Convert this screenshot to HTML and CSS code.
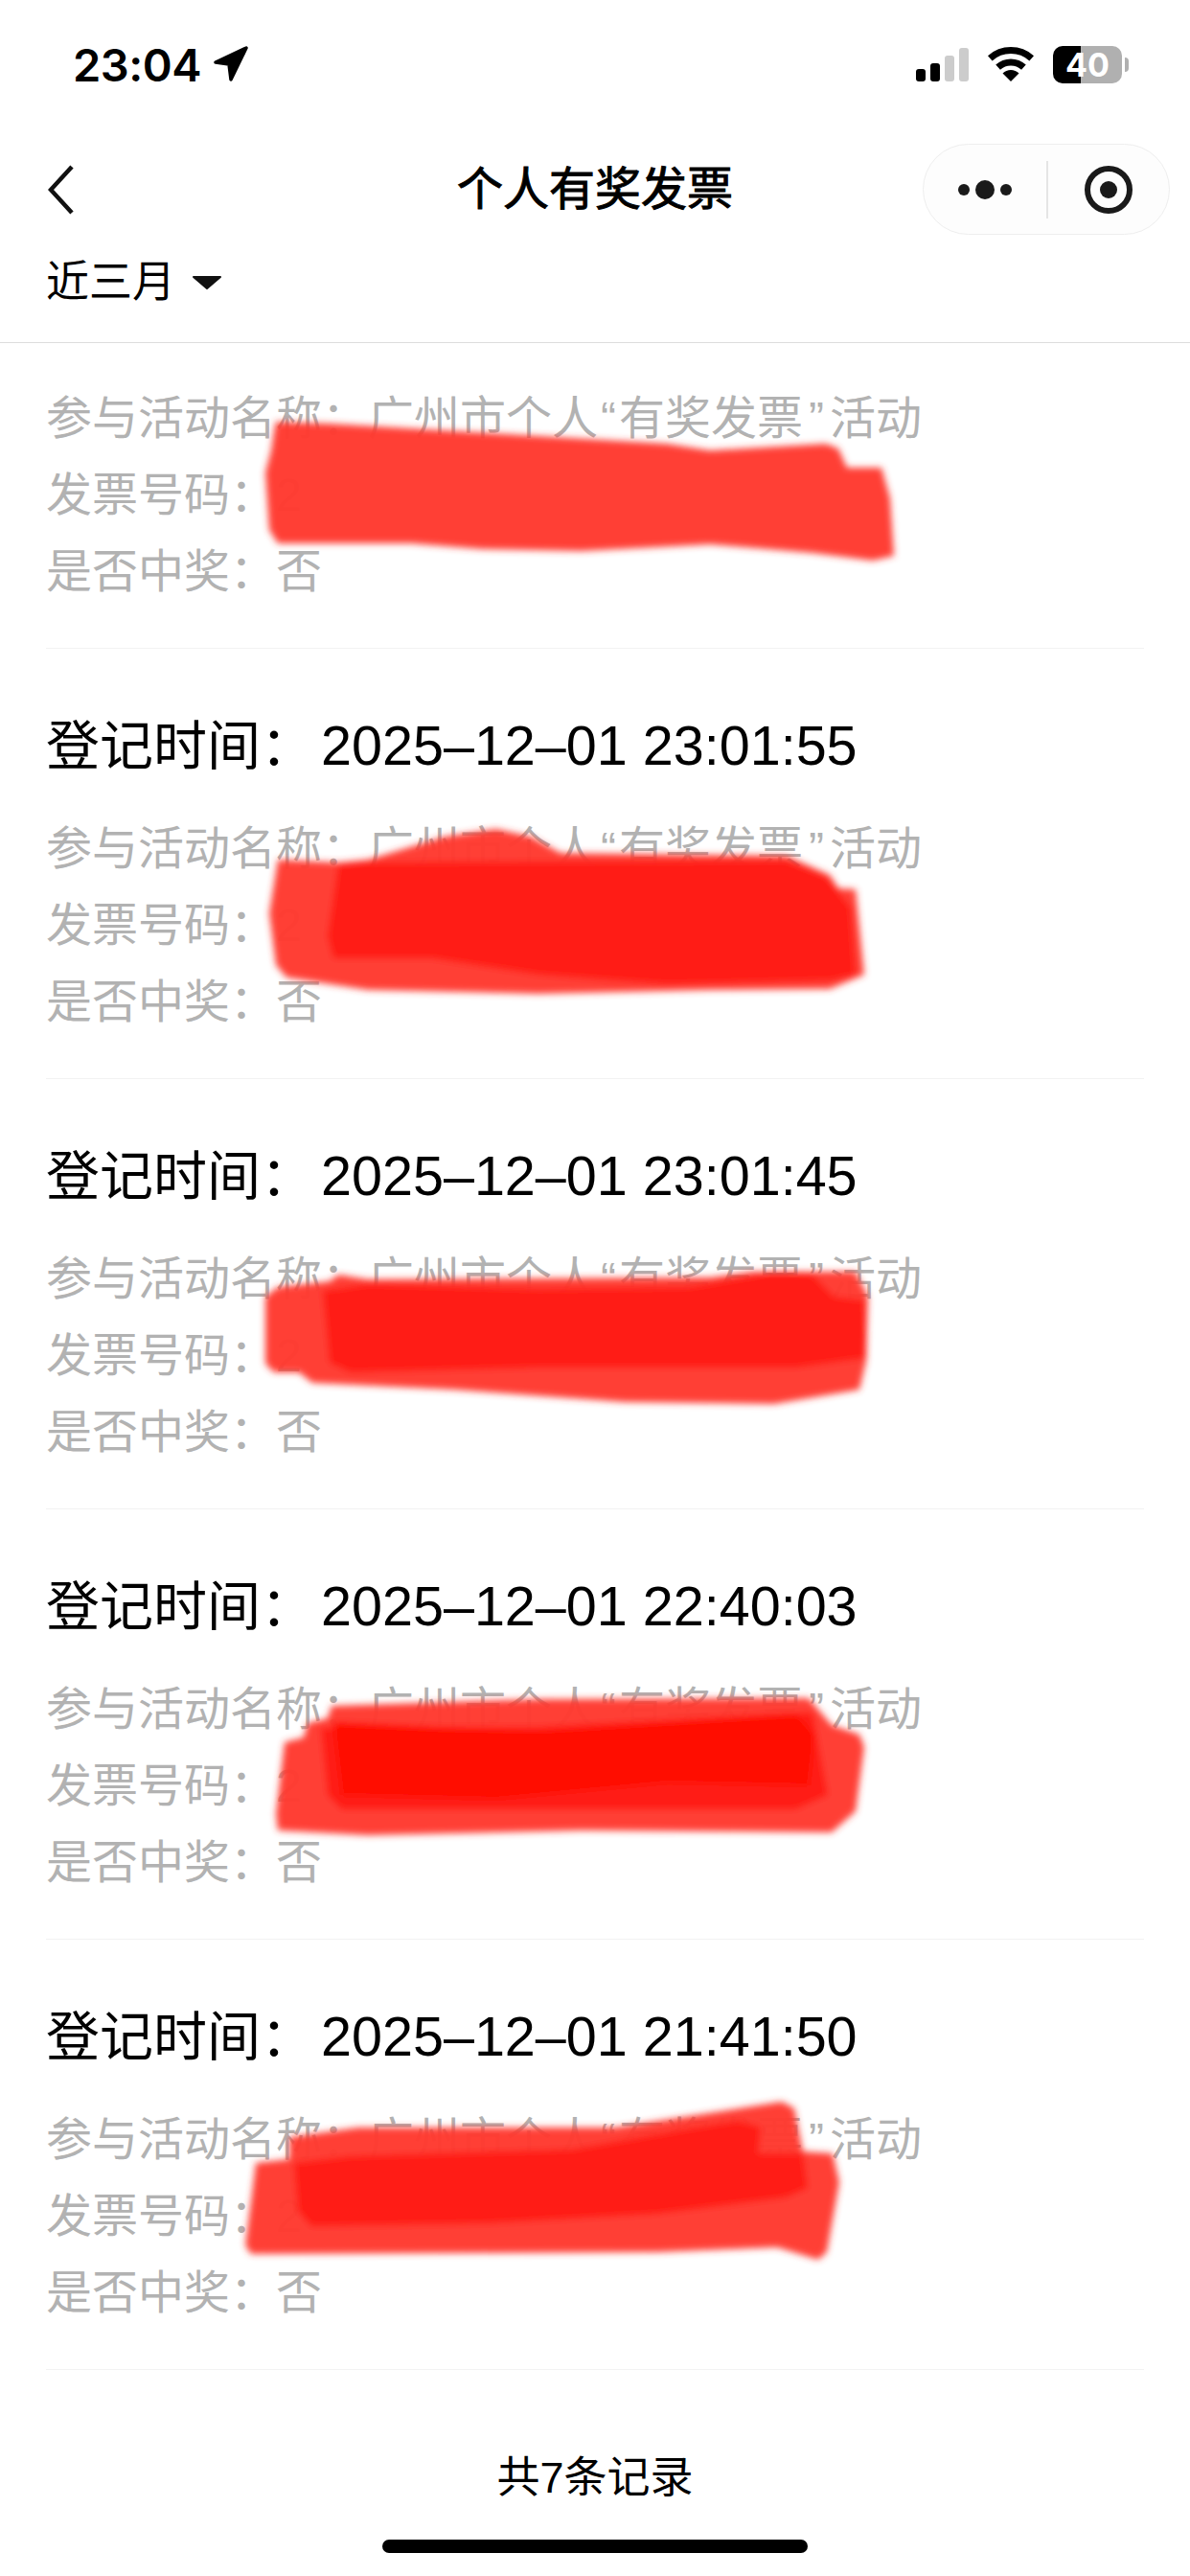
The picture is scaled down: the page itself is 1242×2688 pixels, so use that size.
FILE: index.html
```html
<!DOCTYPE html>
<html lang="zh-CN">
<head>
    <meta charset="UTF-8">
    <meta name="viewport" content="width=device-width, initial-scale=1.0">
    <title>个人有奖发票</title>
    <link rel="stylesheet" href="styles.css">
</head>
<body>
    <main class="page">
        <header class="status-bar">
            <div class="status-time">
                <span>23:04</span>
                <svg class="location-icon" viewBox="0 0 38 38" width="38" height="38">
                    <path d="M3 17 L35 2 L19 35 L17 19 Z" fill="#000" stroke="#000" stroke-width="3.5" stroke-linejoin="round"/>
                </svg>
            </div>
            <div class="status-icons">
                <svg viewBox="0 0 55 35" width="55" height="35">
                    <rect x="0" y="22" width="10" height="13" rx="3" fill="#000"/>
                    <rect x="15" y="16" width="10" height="19" rx="3" fill="#000"/>
                    <rect x="30" y="8" width="10" height="27" rx="3" fill="#ccc"/>
                    <rect x="45" y="0" width="10" height="35" rx="3" fill="#ccc"/>
                </svg>
                <svg viewBox="0 0 48 36" width="48" height="36">
                    <path d="M2.300 11.900 A32.500 32.500 0 0 1 45.700 11.900" fill="none" stroke="#000" stroke-width="7"/>
                    <path d="M10.600 21.100 A20 20 0 0 1 37.400 21.100" fill="none" stroke="#000" stroke-width="7"/>
                    <path d="M24 36 L15.500 27.500 A12 12 0 0 1 32.500 27.500 Z" fill="#000"/>
                </svg>
                <div class="battery">40</div>
            </div>
        </header>

        <nav class="nav-bar">
            <svg class="back-icon" viewBox="0 0 28 52" width="28" height="52">
                <path d="M25 2 L3 26 L25 50" fill="none" stroke="#111" stroke-width="4.500"/>
            </svg>
            <h1 class="nav-title">个人有奖发票</h1>
            <div class="capsule">
                <div class="capsule-more">
                    <span class="dot"></span>
                    <span class="dot dot-big"></span>
                    <span class="dot"></span>
                </div>
                <span class="capsule-line"></span>
                <div class="capsule-close">
                    <span class="close-ring"><span class="close-core"></span></span>
                </div>
            </div>
        </nav>

        <div class="filter-bar">
            <span>近三月</span>
            <svg viewBox="0 0 32 16" width="32" height="16">
                <path d="M2 2 L30 2 L16 14 Z" fill="#111" stroke="#111" stroke-width="2" stroke-linejoin="round"/>
            </svg>
        </div>

        <section class="record-list">
            <div class="record record-first">
                <p class="record-line">参与活动名称：广州市个人<span class="quote-open">“</span>有奖发票<span class="quote-close">”</span>活动</p>
                <p class="record-line">发票号码：2</p>
                <p class="record-line">是否中奖：否</p>
            </div>
            <div class="record">
                <h2 class="record-head">登记时间：<span class="record-date">2025–12–01 23:01:55</span></h2>
                <p class="record-line">参与活动名称：广州市个人<span class="quote-open">“</span>有奖发票<span class="quote-close">”</span>活动</p>
                <p class="record-line">发票号码：2</p>
                <p class="record-line">是否中奖：否</p>
            </div>
            <div class="record">
                <h2 class="record-head">登记时间：<span class="record-date">2025–12–01 23:01:45</span></h2>
                <p class="record-line">参与活动名称：广州市个人<span class="quote-open">“</span>有奖发票<span class="quote-close">”</span>活动</p>
                <p class="record-line">发票号码：2</p>
                <p class="record-line">是否中奖：否</p>
            </div>
            <div class="record">
                <h2 class="record-head">登记时间：<span class="record-date">2025–12–01 22:40:03</span></h2>
                <p class="record-line">参与活动名称：广州市个人<span class="quote-open">“</span>有奖发票<span class="quote-close">”</span>活动</p>
                <p class="record-line">发票号码：2</p>
                <p class="record-line">是否中奖：否</p>
            </div>
            <div class="record">
                <h2 class="record-head">登记时间：<span class="record-date">2025–12–01 21:41:50</span></h2>
                <p class="record-line">参与活动名称：广州市个人<span class="quote-open">“</span>有奖发票<span class="quote-close">”</span>活动</p>
                <p class="record-line">发票号码：2</p>
                <p class="record-line">是否中奖：否</p>
            </div>
        </section>

        <footer class="list-footer">共7条记录</footer>
        <div class="home-bar"></div>

        <!-- red marker scribbles over the invoice numbers -->
        <svg class="scribbles" viewBox="0 0 1242 2688" width="1242" height="2688">
            <defs>
                <filter id="soft" x="-5%" y="-20%" width="110%" height="140%">
                    <feGaussianBlur stdDeviation="3.500"/>
                </filter>
            </defs>
            <g filter="url(#soft)">
                <path class="mark-light" d="M288 440 L344 442 L562 455 L696 463 L741 470 L862 463 L875 468 L884 488 L920 488 L929 520 L933 580 L911 585 L848 577 L741 568 L607 575 L504 573 L429 567 L290 567 L281 553 L277 493 L283 470 L286 450 Z"/>

                <path class="mark-light" d="M290 897 L353 900 L384 897 L464 873 L518 865 L554 873 L585 890 L821 893 L866 913 L875 927 L893 928 L902 1017 L866 1032 L741 1033 L562 1037 L384 1033 L299 1020 L288 1007 L281 953 Z"/>
                <path class="mark-dark" d="M353 903 L384 900 L821 898 L862 915 L888 947 L893 1017 L866 1023 L696 1027 L562 1017 L451 1000 L348 1000 L342 977 Z"/>

                <path class="mark-light" d="M277 1353 L290 1343 L344 1337 L353 1330 L384 1335 L741 1333 L786 1327 L893 1327 L906 1353 L904 1420 L897 1450 L808 1465 L652 1463 L473 1450 L326 1443 L312 1432 L286 1432 L277 1423 Z"/>
                <path class="mark-dark" d="M337 1347 L384 1340 L562 1345 L719 1343 L808 1328 L848 1330 L870 1353 L902 1357 L904 1417 L830 1427 L562 1427 L366 1432 L344 1422 Z"/>

                <path class="mark-light" d="M346 1780 L562 1773 L844 1772 L868 1800 L897 1810 L902 1823 L893 1890 L868 1912 L607 1910 L384 1915 L290 1910 L288 1893 L297 1818 L317 1813 L321 1798 L342 1793 Z"/>
                <path class="mark-dark" d="M335 1803 L562 1802 L786 1790 L848 1787 L864 1873 L830 1888 L357 1888 L342 1873 Z"/>
                <path class="mark-deep" d="M348 1797 L562 1807 L830 1788 L850 1810 L844 1863 L696 1860 L518 1877 L357 1873 Z"/>

                <path class="mark-light" d="M267 2257 L302 2253 L302 2230 L374 2220 L642 2220 L753 2203 L816 2193 L829 2200 L838 2245 L869 2247 L876 2277 L863 2350 L854 2358 L811 2345 L686 2350 L262 2352 L256 2343 L262 2297 Z"/>
                <path class="mark-dark" d="M307 2257 L365 2250 L597 2243 L709 2223 L771 2213 L794 2220 L791 2247 L838 2247 L843 2283 L820 2293 L686 2310 L508 2320 L325 2323 L311 2307 Z"/>
            </g>
        </svg>
    </main>
</body>
</html>
```

FILE: styles.css
```css
/* Global Styles */
body {
    margin: 0;
    background-color: #fff;
    color: #000;
    font-family: "Liberation Sans", "Noto Sans CJK SC", sans-serif;
}

.page {
    position: relative;
    width: 1242px;
    height: 2688px;
    overflow: hidden;
    display: flex;
    flex-direction: column;
}

/* Status Bar */
.status-bar {
    height: 134px;
    padding: 0 64px 2px 76px;
    display: flex;
    align-items: center;
    justify-content: space-between;
}

.status-time {
    display: flex;
    align-items: center;
    gap: 12px;
    font-family: Inter, sans-serif;
    font-size: 47px;
    font-weight: 600;
    letter-spacing: -0.5px;
}

.status-icons {
    display: flex;
    align-items: center;
    gap: 20px;
}

.battery {
    position: relative;
    width: 72px;
    height: 39px;
    margin-right: 7px;
    border-radius: 10px;
    background: linear-gradient(90deg, #000 40%, #b0b0b0 40%);
    color: #fff;
    font-family: Inter, sans-serif;
    font-size: 34px;
    font-weight: 700;
    line-height: 39px;
    text-align: center;
}

.battery::after {
    content: "";
    position: absolute;
    top: 12px;
    right: -7px;
    width: 4px;
    height: 15px;
    border-radius: 0 4px 4px 0;
    background-color: #b0b0b0;
}

/* Navigation */
.nav-bar {
    height: 95px;
    margin-top: 14px;
    padding: 0 21px;
    display: grid;
    grid-template-columns: 1fr auto 1fr;
    align-items: center;
}

.back-icon {
    margin-left: 29px;
}

.nav-title {
    margin: 0;
    font-size: 48px;
    font-weight: 400;
    line-height: 60px;
    -webkit-text-stroke: 1px #000;
}

.capsule {
    justify-self: end;
    box-sizing: border-box;
    width: 258px;
    height: 95px;
    border: 1.5px solid #eee;
    border-radius: 48px;
    background-color: #fdfdfd;
    display: flex;
    align-items: center;
}

.capsule-more {
    width: 128px;
    display: flex;
    align-items: center;
    justify-content: center;
    gap: 6px;
}

.dot {
    width: 12px;
    height: 12px;
    border-radius: 50%;
    background-color: #1a1a1a;
}

.dot-big {
    width: 20px;
    height: 20px;
}

.capsule-line {
    width: 1.5px;
    height: 60px;
    background-color: #e5e5e5;
}

.capsule-close {
    flex: 1;
    display: flex;
    justify-content: center;
}

.close-ring {
    box-sizing: border-box;
    width: 50px;
    height: 50px;
    border: 6px solid #1a1a1a;
    border-radius: 50%;
    display: flex;
    align-items: center;
    justify-content: center;
}

.close-core {
    width: 18px;
    height: 18px;
    border-radius: 50%;
    background-color: #1a1a1a;
}

/* Filter */
.filter-bar {
    padding: 20px 48px 32px;
    border-bottom: 1.5px solid #ddd;
    display: flex;
    align-items: center;
    gap: 17px;
    font-size: 45px;
    line-height: 60px;
}

/* Record List */
.record-list {
    padding: 0 48px;
}

.record {
    padding: 56px 0 39px;
    border-bottom: 1px solid #f2f2f2;
}

.record-first {
    padding-top: 39px;
}

.record-head {
    margin: 0 0 22px;
    font-size: 56px;
    font-weight: 400;
    line-height: 90px;
}

.record-date {
    margin-left: 7px;
    font-size: 57.5px;
}

.record-line {
    margin: 0;
    color: #b2b2b2;
    font-size: 48px;
    line-height: 80px;
}

.quote-open {
    margin: 0 3px;
}

.quote-close {
    margin: 0 6px;
}

/* Footer */
.list-footer {
    margin-top: 83px;
    text-align: center;
    font-size: 45px;
    line-height: 60px;
}

.home-bar {
    width: 444px;
    height: 14px;
    margin: 34px auto 0;
    border-radius: 7px;
    background-color: #000;
}

/* Scribbles */
.scribbles {
    position: absolute;
    top: 0;
    left: 0;
}

.mark-light {
    fill: #ff3a30;
    fill-opacity: 0.97;
}

.mark-dark {
    fill: #ff1c12;
}

.mark-deep {
    fill: #ff0c03;
}
```
